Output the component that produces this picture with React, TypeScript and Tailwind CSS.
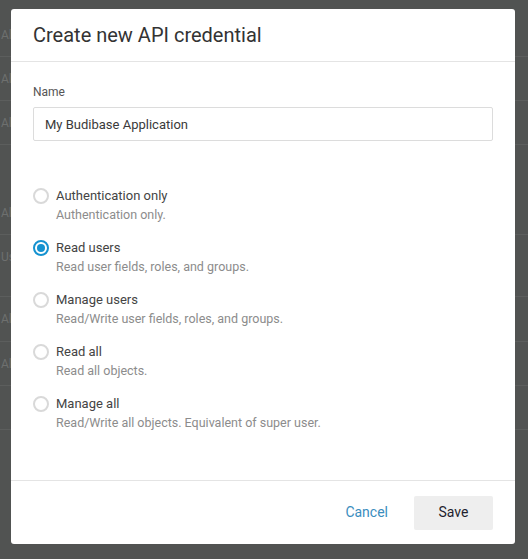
import React, { useState } from 'react';

const backdropRows = [
  { h: 57, text: 'All', pt: 27 },
  { h: 44, text: 'All' },
  { h: 44, text: 'All' },
  { h: 90, text: 'All', pt: 60 },
  { h: 62, text: 'Us' },
  { h: 45, text: 'All' },
  { h: 44, text: 'All' },
  { h: 44, text: '' },
];

const options = [
  { id: 'auth', label: 'Authentication only', description: 'Authentication only.' },
  { id: 'read_users', label: 'Read users', description: 'Read user fields, roles, and groups.' },
  { id: 'manage_users', label: 'Manage users', description: 'Read/Write user fields, roles, and groups.' },
  { id: 'read_all', label: 'Read all', description: 'Read all objects.' },
  { id: 'manage_all', label: 'Manage all', description: 'Read/Write all objects. Equivalent of super user.' },
];

function Radio({ checked }: { checked: boolean }) {
  return (
    <span
      className={`mt-[2px] flex h-4 w-4 shrink-0 items-center justify-center rounded-full border-2 ${
        checked ? 'border-[#1592d0]' : 'border-[#d9d9d9]'
      }`}
    >
      {checked && <span className="h-[8px] w-[8px] rounded-full bg-[#1592d0]" />}
    </span>
  );
}

export default function App() {
  const [name, setName] = useState('My Budibase Application');
  const [selected, setSelected] = useState('read_users');

  return (
    <div
      className="relative h-[559px] w-[528px] overflow-hidden bg-[#515352]"
      style={{ fontFamily: 'Roboto, "Liberation Sans", sans-serif' }}
    >
      {/* dimmed page behind the modal */}
      <div className="flex flex-col">
        {backdropRows.map((row, i) => (
          <div
            key={i}
            className="border-b border-[#5c5e5d] pl-[1px] text-[12px] leading-4 text-[#6e706f]"
            style={{ height: row.h, paddingTop: row.pt ?? 14 }}
          >
            {row.text}
          </div>
        ))}
      </div>

      {/* modal */}
      <div className="absolute left-[11px] top-[9px] flex h-[535px] w-[504px] flex-col rounded-[3px] bg-white">
        <div className="flex h-[53px] shrink-0 items-center border-b border-[#e4e4e4] px-[22px]">
          <h2 className="text-[20px] font-normal text-[#333]">Create new API credential</h2>
        </div>

        <div className="flex-1 px-[22px] pt-[22px]">
          <label className="block text-[12px] leading-4 text-[#555]">Name</label>
          <input
            value={name}
            onChange={(e) => setName(e.target.value)}
            className="mt-[7px] h-[34px] w-full rounded-[2px] border border-[#dcdcdc] px-[11px] text-[13px] text-[#3a3a3a] outline-none"
          />

          <div className="mt-[45px] flex flex-col gap-[15px]">
            {options.map((opt) => (
              <button
                key={opt.id}
                type="button"
                onClick={() => setSelected(opt.id)}
                className="flex items-start gap-[7px] text-left"
              >
                <Radio checked={selected === opt.id} />
                <span className="flex flex-col">
                  <span className="text-[13px] leading-5 text-[#444]">{opt.label}</span>
                  <span className="mt-[1px] text-[12.5px] leading-4 text-[#8c8c8c]">
                    {opt.description}
                  </span>
                </span>
              </button>
            ))}
          </div>
        </div>

        <div className="flex h-[64px] shrink-0 items-center justify-end gap-[13px] border-t border-[#e4e4e4] px-[22px]">
          <button type="button" className="px-[13px] text-[14px] text-[#3a8dbe]">
            Cancel
          </button>
          <button
            type="button"
            className="h-[34px] w-[79px] rounded-[2px] bg-[#eeeeee] text-[14px] text-[#1f1f2f]"
          >
            Save
          </button>
        </div>
      </div>
    </div>
  );
}
